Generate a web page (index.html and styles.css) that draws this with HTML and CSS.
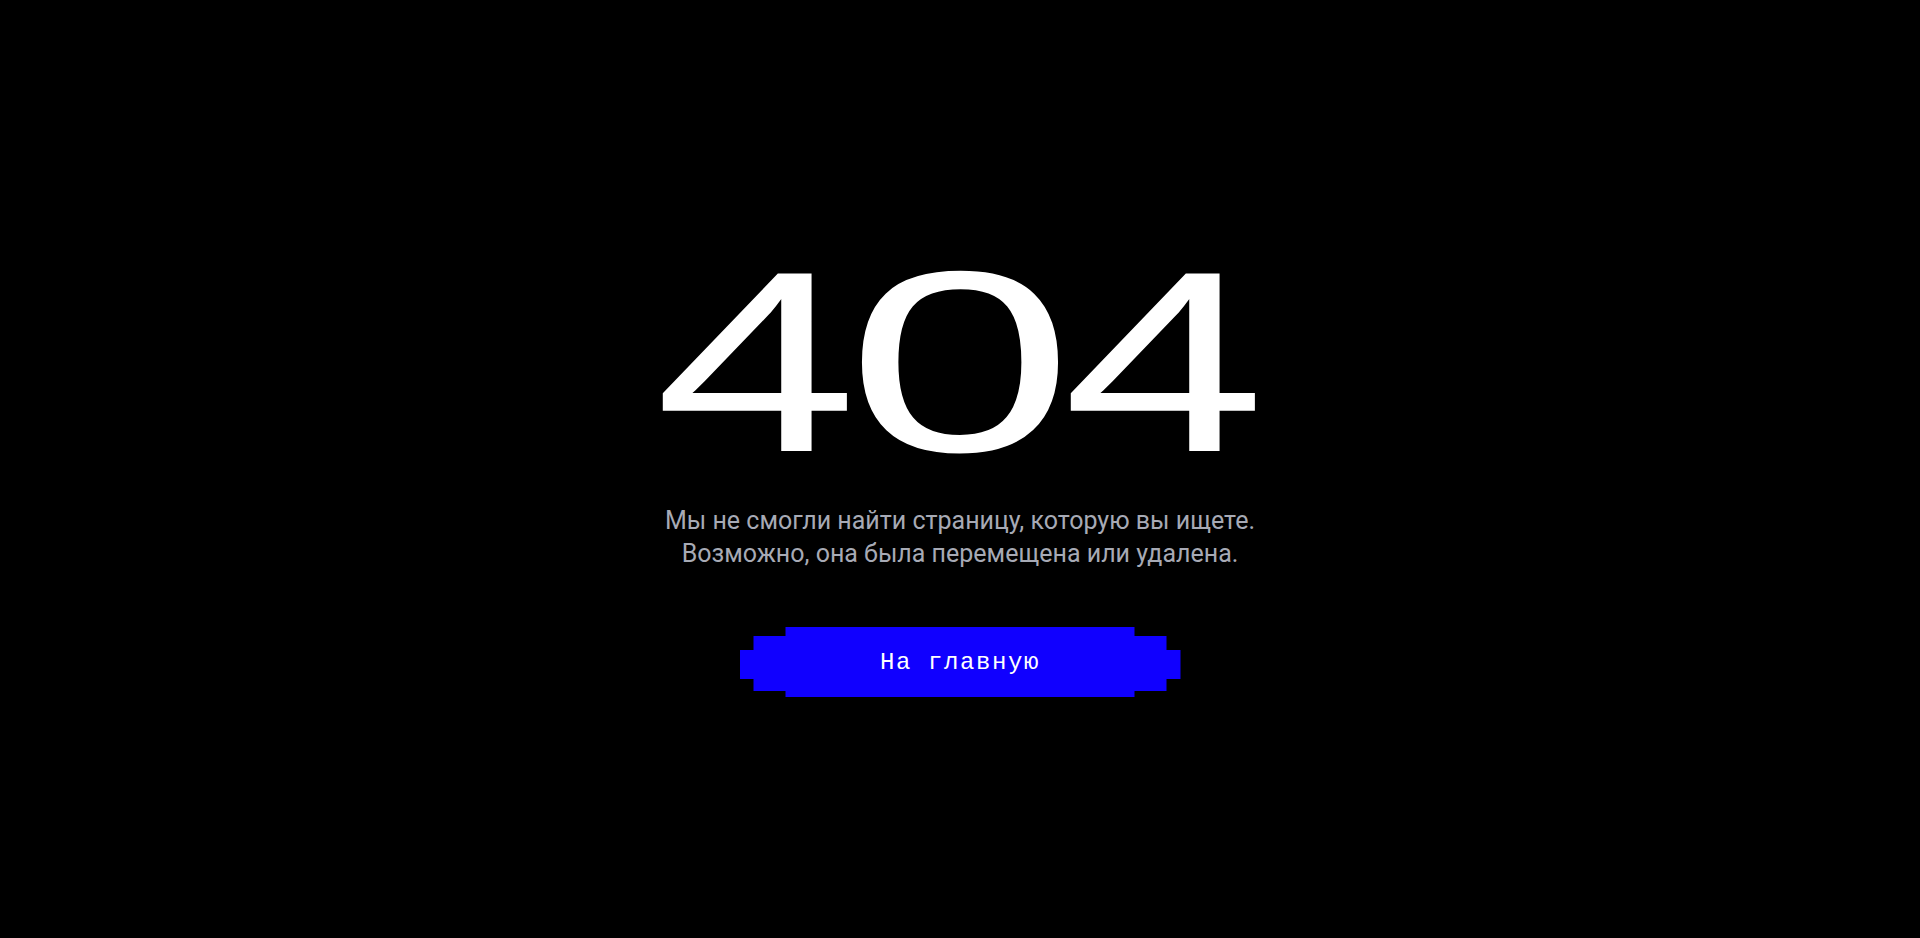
FILE: index.html
```html
<!DOCTYPE html>
<html lang="ru">
<head>
<meta charset="utf-8">
<title>404</title>
<link rel="stylesheet" href="styles.css">
</head>
<body>
<main class="page">
  <h1 class="code"><span class="digit four">4</span><span class="digit zero">0</span><span class="digit four">4</span></h1>
  <p class="message">Мы не смогли найти страницу, которую вы ищете.<br>Возможно, она была перемещена или удалена.</p>
  <a class="home-btn" href="#">На главную</a>
</main>
</body>
</html>
```

FILE: styles.css
```css
* { box-sizing: border-box; }
html, body { margin: 0; padding: 0; background: #000; }
body { font-family: "Roboto", "Liberation Sans", sans-serif; }
.page {
  min-height: 100vh;
  padding-bottom: 8px;
  display: flex;
  flex-direction: column;
  align-items: center;
  justify-content: center;
}
.code {
  margin: 0;
  display: flex;
  justify-content: center;
  font-family: "Liberation Sans", Arial, sans-serif;
  font-weight: 400;
  font-size: 258px;
  line-height: 258px;
  height: 258px;
  color: #fff;
}
.digit {
  display: inline-block;
  width: 204px;
  text-align: center;
  transform-origin: 50% 50%;
}
.four { transform: scaleX(1.416); }
.zero { transform: scaleX(1.59); }
.message {
  margin: 13px 0 0;
  text-align: center;
  font-size: 25px;
  line-height: 33px;
  color: #a7aab5;
}
.home-btn {
  margin-top: 57px;
  width: 441px;
  height: 70px;
  display: flex;
  align-items: center;
  justify-content: center;
  background: #1000ff;
  color: #fff;
  text-decoration: none;
  font-family: "Liberation Mono", monospace;
  font-size: 24px;
  letter-spacing: 1.6px;
  clip-path: polygon(46px 0, 395px 0, 395px 9px, 427px 9px, 427px 23px, 441px 23px, 441px 52px, 427px 52px, 427px 64px, 395px 64px, 395px 70px, 46px 70px, 46px 64px, 14px 64px, 14px 52px, 0 52px, 0 23px, 14px 23px, 14px 9px, 46px 9px);
}
```
